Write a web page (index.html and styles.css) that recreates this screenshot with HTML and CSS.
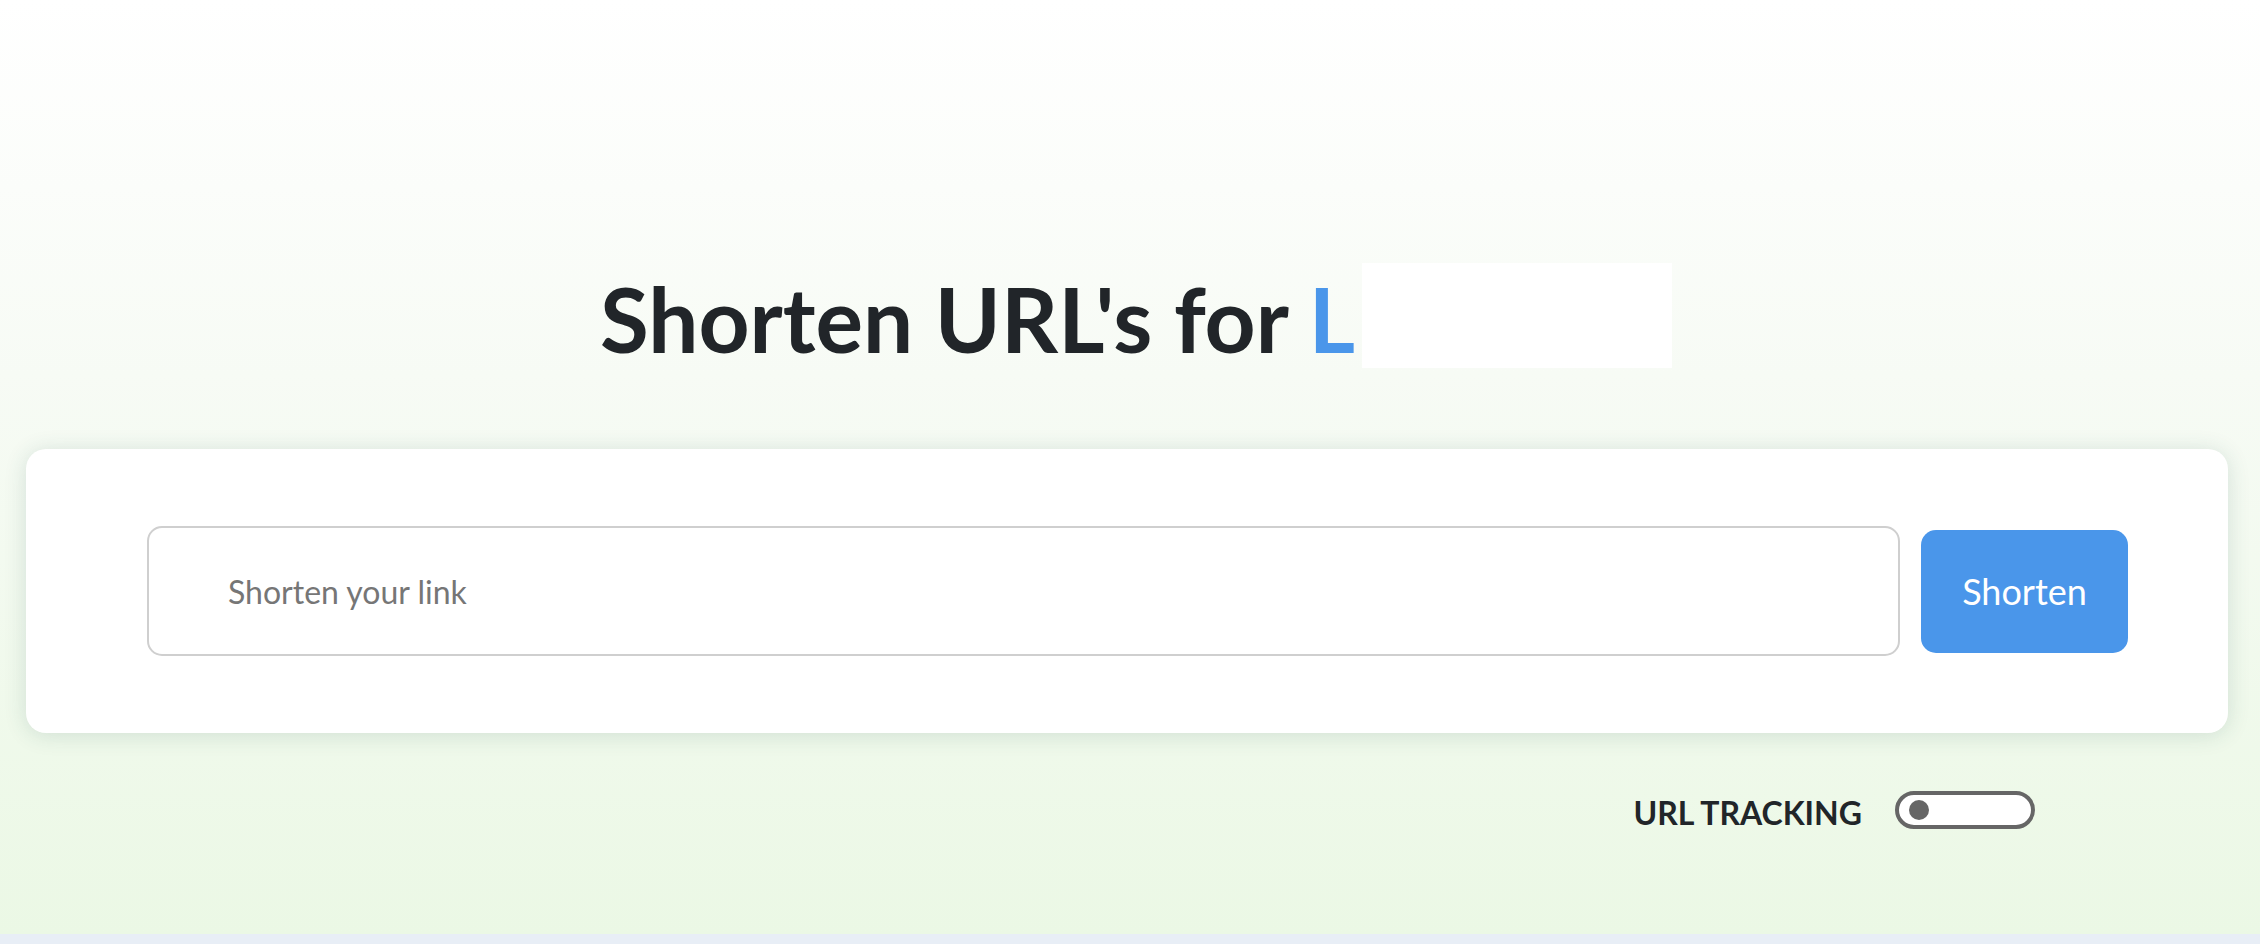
FILE: index.html
```html
<!DOCTYPE html>
<html lang="en">
<head>
<meta charset="utf-8">
<title>Shorten URL's</title>
<link rel="stylesheet" href="styles.css">
</head>
<body>
<main class="hero">
  <h1 class="title">Shorten URL's for <span class="accent">L</span><span class="redact"></span></h1>
  <section class="card">
    <input class="link-input" type="text" placeholder="Shorten your link">
    <button class="btn" type="button">Shorten</button>
  </section>
  <div class="tracking">
    <span class="tracking-label">URL TRACKING</span>
    <span class="toggle"><span class="knob"></span></span>
  </div>
</main>
<footer class="strip"></footer>
</body>
</html>
```

FILE: styles.css
```css
html, body {
  margin: 0;
  padding: 0;
}
body {
  font-family: Lato, "Noto Sans", sans-serif;
  color: #212529;
  background: #e8eef6;
  overflow: hidden;
}
.hero {
  height: 934px;
  box-sizing: border-box;
  padding-top: 263px;
  background: linear-gradient(to bottom, #ffffff 0%, #f7fbf5 40%, #ebf8e5 100%);
  display: flex;
  flex-direction: column;
}
.title {
  margin: 0;
  text-align: center;
  font-size: 89px;
  line-height: 111px;
  font-weight: 700;
  color: #212529;
  padding-left: 12px;
}
.accent {
  color: #4a96ea;
}
.redact {
  display: inline-block;
  width: 310px;
  height: 105px;
  margin-left: 7px;
  background: #ffffff;
  vertical-align: top;
}
.card {
  margin: 75px 32px 0 26px;
  height: 284px;
  box-sizing: border-box;
  padding: 0 100px 0 121px;
  background: #ffffff;
  border-radius: 20px;
  box-shadow: 0 2px 22px rgba(40, 90, 90, 0.16);
  display: flex;
  align-items: center;
  gap: 21px;
}
.link-input {
  flex: 1;
  height: 130px;
  box-sizing: border-box;
  border: 2px solid #cfcfcf;
  border-radius: 15px;
  padding: 0 20px 0 79px;
  font-family: Lato, "Noto Sans", sans-serif;
  font-size: 32px;
  color: #333;
  background: #fff;
  outline: none;
}
.link-input::placeholder {
  color: #767676;
}
.btn {
  width: 207px;
  height: 123px;
  border: none;
  border-radius: 15px;
  background: #4a96ea;
  color: #ffffff;
  font-family: Lato, "Noto Sans", sans-serif;
  font-size: 36px;
  padding: 0;
}
.tracking {
  margin-top: 54px;
  padding-right: 225px;
  display: flex;
  justify-content: flex-end;
  align-items: center;
  gap: 33px;
}
.tracking-label {
  font-size: 32px;
  font-weight: 700;
  color: #212529;
  margin-top: 6px;
}
.toggle {
  width: 140px;
  height: 38px;
  box-sizing: border-box;
  border: 4px solid #666666;
  border-radius: 19px;
  background: #ffffff;
  display: flex;
  align-items: center;
  padding-left: 10px;
}
.knob {
  width: 20px;
  height: 20px;
  border-radius: 50%;
  background: #666666;
}
.strip {
  height: 10px;
  background: #e8eef6;
}
```
